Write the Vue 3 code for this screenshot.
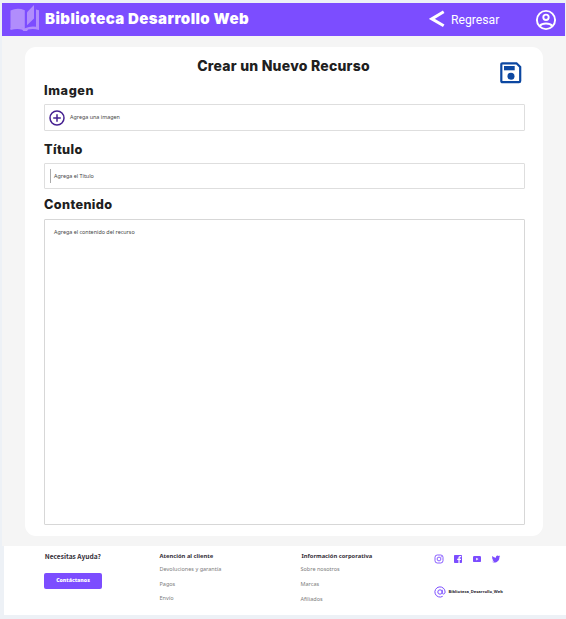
<script setup>
const support = ['Devoluciones y garantía', 'Pagos', 'Envío']
const company = ['Sobre nosotros', 'Marcas', 'Afiliados']
</script>

<template>
  <div class="page">
    <header class="topbar">
      <svg class="book" viewBox="0 0 30 28">
        <path d="M.5 6.500Q7.500 3.300 14.800 6.300V24.300Q7.500 22.300 .5 25Z" />
        <path d="M17 8.300 24 1V14.600L17 21.200Z" />
        <path d="M26 5.400 29 6.300V26Q23 24 18.200 25.600L17 27H13.400L12.300 25.800Q7.500 24 .5 26V24Q8 21.500 15 24.300Q20.500 21.800 26 22.800Z" />
      </svg>
      <h1 class="brand">Biblioteca Desarrollo Web</h1>
      <a class="back">
        <svg class="chevron" viewBox="0 0 16 18"><path d="M14.700 1.800 2.800 8.900 14.700 15.800" /></svg>
        <span>Regresar</span>
      </a>
      <svg class="account" viewBox="0 0 22 22">
        <circle cx="11" cy="11" r="9.100" />
        <circle cx="11" cy="8.300" r="2.700" />
        <path d="M4.500 17.100C7.500 13.700 14.500 13.700 17.500 17.100" />
      </svg>
    </header>

    <main class="content">
      <section class="card">
        <div class="heading">
          <h2>Crear un Nuevo Recurso</h2>
          <svg class="save" viewBox="0 0 22 22">
            <path class="outline" d="M2.500 1.300H16.500L20.200 5V19Q20.200 20.200 19 20.200H2.500Q1.300 20.200 1.300 19V2.500Q1.300 1.300 2.500 1.300Z" />
            <path class="solid" d="M4 4H14.700V8.300H4Z" />
            <circle class="solid" cx="11" cy="14.200" r="3.500" />
          </svg>
        </div>

        <h3 class="label image-label">Imagen</h3>
        <div class="field image-field">
          <svg class="add" viewBox="0 0 16 16"><circle cx="8" cy="8" r="7" /><path d="M8 4.200V11.800M4.200 8H11.800" /></svg>
          <span>Agrega una imagen</span>
        </div>

        <h3 class="label title-label">Título</h3>
        <div class="field title-field"><i class="caret"></i><span>Agrega el Título</span></div>

        <h3 class="label content-label">Contenido</h3>
        <div class="field area"><span>Agrega el contenido del recurso</span></div>
      </section>
    </main>

    <footer class="footer">
      <div class="help">
        <h4>Necesitas Ayuda?</h4>
        <button>Contáctanos</button>
      </div>
      <div class="links support">
        <h5>Atención al cliente</h5>
        <a v-for="item in support" :key="item">{{ item }}</a>
      </div>
      <div class="links company">
        <h5>Información corporativa</h5>
        <a v-for="item in company" :key="item">{{ item }}</a>
      </div>
      <div class="social">
        <div class="icons">
          <svg viewBox="0 0 10 10"><rect class="line" x="1" y="1" width="8" height="8" rx="2.300" /><circle class="line" cx="5" cy="5" r="1.900" /><circle cx="7.300" cy="2.700" r=".55" /></svg>
          <svg viewBox="0 0 10 10"><path d="M1.800 1H8.200Q9 1 9 1.800V8.200Q9 9 8.200 9H6.700V6H7.900L8.100 4.700H6.700V3.900Q6.700 3.200 7.400 3.200H8.200V2.100H7Q5.400 2.100 5.400 3.700V4.700H4.200V6H5.400V9H1.800Q1 9 1 8.200V1.800Q1 1 1.800 1Z" /></svg>
          <svg viewBox="0 0 10 10"><path fill-rule="evenodd" d="M2.200 2H7.800Q9 2 9 3.200V6.900Q9 8.100 7.800 8.100H2.200Q1 8.100 1 6.900V3.200Q1 2 2.200 2ZM4.200 3.700V6.400L6.500 5.050Z" /></svg>
          <svg viewBox="0 0 10 10"><path d="M9.200 2.400 8.400 3.300C8.500 6.900 5.600 8.800 3.100 8.500Q1.800 8.400 1 7.800 2.300 7.800 3.100 7.200 1.900 7 1.600 6H2.300Q1.100 5.500 1 4.200L1.700 4.400Q.6 3.300 1.300 1.900 2.800 3.600 5 3.700C4.700 1.400 6.700.9 7.800 2L8.900 1.600 8.400 2.500Z" /></svg>
        </div>
        <div class="handle">
          <svg viewBox="0 0 12 12"><circle cx="6" cy="6" r="2.200" /><path d="M8.200 3.800V6.800C8.200 8.700 11.100 8.400 11.100 6A5.100 5.100 0 1 0 8.700 10.300" /></svg>
          <span>Biblioteca_Desarrollo_Web</span>
        </div>
      </div>
    </footer>
  </div>
</template>

<style>
body { margin: 0; background: #edf1f6; }
</style>

<style scoped>
* { box-sizing: border-box; }
h1, h2, h3, h4, h5 { margin: 0; white-space: nowrap; }
svg { display: block; flex: none; }
.page { width: 566px; height: 619px; padding: 3px 0 0 2px; overflow: hidden; font-family: "Noto Sans", sans-serif; background: #edf1f6; }
.topbar { width: 563px; height: 33px; background: #7c4dff; display: flex; align-items: flex-start; box-shadow: 0 1px #d9cdfc; }
.book { width: 30px; height: 28px; margin: 1px 0 0 8px; fill: #b18dfc; }
.brand { width: 220px; margin: 4px 0 0 5px; font: 900 15px/24px Inter, sans-serif; letter-spacing: 0.420px; color: #fff; }
.back { display: flex; margin-left: 164px; color: #fff; font: 12.200px/18px Roboto, sans-serif; }
.chevron { width: 16px; height: 18px; margin: 7px 6px 0 0; fill: none; stroke: #fff; stroke-width: 3; }
.back span { width: 48px; padding-top: 8px; }
.account { width: 22px; height: 22px; margin: 6px 0 0 36px; fill: none; stroke: #fff; stroke-width: 1.900; }
.content { height: 510px; padding: 11px 23px 10px; background: #f5f5f5; }
.card { width: 518px; height: 489px; border-radius: 11px; background: #fff; padding: 0 18px 0 19px; }
.heading { height: 36px; position: relative; text-align: center; }
.heading h2 { padding: 8px 2px 0 0; font: 800 14px/22px Inter, sans-serif; letter-spacing: 0.230px; color: #202020; }
.save { position: absolute; right: 3px; top: 15px; width: 22px; height: 22px; }
.outline { fill: none; stroke: #0c47a1; stroke-width: 2.200; }
.solid { fill: #0c47a1; }
.label { height: 20px; font: 800 12.700px/15px Inter, sans-serif; letter-spacing: 0.350px; color: #202020; }
.image-label { letter-spacing: 0.600px; }
.field { border: 1px solid #dedede; border-radius: 1px; width: 481px; height: 27px; display: flex; align-items: center; font-size: 5.400px; line-height: 8px; color: #444; white-space: nowrap; }
.image-field { margin-top: 1px; padding-left: 4px; }
.image-field span { padding-bottom: 1px; }
.add { width: 16px; height: 16px; margin-right: 5px; fill: none; stroke: #452091; stroke-width: 1.500; }
.title-label { margin-top: 11px; }
.title-field { margin-top: 1px; height: 26px; padding-left: 5px; }
.caret { width: 1px; height: 14px; background: #aaa; margin-right: 3px; }
.content-label { margin-top: 8px; }
.area { margin-top: 2px; height: 306px; align-items: flex-start; padding: 8px 0 0 9px; border-color: #d7d7d7; }
.footer { width: 562px; height: 69px; margin-left: 2px; background: #fff; display: flex; }
.help { width: 155.500px; padding: 5px 0 0 40px; }
.help h4 { padding-left: 0.700px; font: 700 6.650px/10px "Noto Sans CJK JP", sans-serif; color: #353039; }
.help button { display: block; border: 0; border-radius: 2px; width: 58px; height: 16px; margin-top: 12px; padding: 0 0 1px; background: #7c4dff; color: #fff; font: 900 5.200px/15px "Noto Sans", sans-serif; }
.links { display: flex; flex-direction: column; padding-top: 5px; white-space: nowrap; font-size: 5.500px; line-height: 8px; color: #7c7c7c; }
.links h5 { font: 700 5.800px/10px "Noto Sans", sans-serif; color: #353039; }
.support { width: 141px; }
.company { width: 133px; }
.links a { margin-top: 4px; height: 8px; }
.links a + a { margin-top: 6.500px; }
.company a + a { margin-top: 7px; }
.company h5 { margin-left: 1px; }
.icons { display: flex; gap: 9px; padding-top: 8px; }
.icons svg { width: 10px; height: 10px; fill: #7c4dff; }
.icons .line { fill: none; stroke: #7c4dff; stroke-width: .9; }
.handle { display: flex; align-items: center; margin-top: 22px; white-space: nowrap; }
.handle svg { width: 12px; height: 12px; margin: 0 3px 0 0; fill: none; stroke: #7c4dff; stroke-width: 1; }
.handle span { font: 700 4.150px/8px "Noto Sans", sans-serif; color: #27232d; }
</style>
